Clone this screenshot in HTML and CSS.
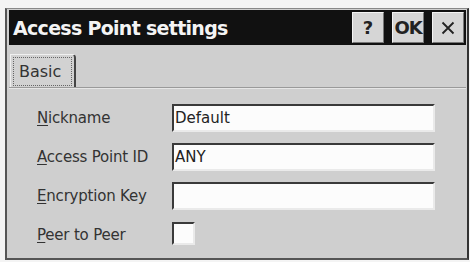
FILE: index.html
```html
<!DOCTYPE html>
<html>
<head>
<meta charset="utf-8">
<link rel="stylesheet" href="styles.css">
</head>
<body>
<div class="window">
  <div class="titlebar">
    <span class="title">Access Point settings</span>
    <div class="tbtns">
      <span class="tbtn">?</span>
      <span class="tbtn ok">OK</span>
      <span class="tbtn close">
        <svg width="14" height="14" viewBox="0 0 14 14"><path d="M1.5 1.5 L12.5 12.5 M12.5 1.5 L1.5 12.5" stroke="#222" stroke-width="1.8"/></svg>
      </span>
    </div>
  </div>
  <div class="tabs">
    <div class="tab"><span class="tablabel">Basic</span></div>
  </div>
  <div class="panel">
    <div class="row">
      <span class="lbl"><u>N</u>ickname</span>
      <div class="field">Default</div>
    </div>
    <div class="row">
      <span class="lbl"><u>A</u>ccess Point ID</span>
      <div class="field">ANY</div>
    </div>
    <div class="row">
      <span class="lbl"><u>E</u>ncryption Key</span>
      <div class="field"></div>
    </div>
    <div class="row">
      <span class="lbl"><u>P</u>eer to Peer</span>
      <div class="check"></div>
    </div>
  </div>
</div>
</body>
</html>
```
FILE: styles.css
```css
html, body {
  margin: 0;
  padding: 0;
  background: #f4f4f4;
}
body {
  font-family: "DejaVu Sans", Tahoma, sans-serif;
  color: #222;
}
.window {
  margin: 8px 0 0 5px;
  width: 457px;
  height: 248px;
  background: #cfcfcf;
  border-left: 2px solid #555;
  border-top: 1px solid #888;
  border-right: 2px solid #333;
  border-bottom: 2px solid #555;
  padding: 1px 1px 0 2px;
  display: flex;
  flex-direction: column;
}
.titlebar {
  height: 35px;
  flex: none;
  background: #111;
  display: flex;
  align-items: center;
  justify-content: space-between;
  padding: 0 2px 0 4px;
}
.title {
  color: #f4f4f4;
  font-family: "DejaVu Sans", sans-serif;
  font-weight: bold;
  font-size: 19px;
  letter-spacing: -0.7px;
}
.tbtns {
  display: flex;
  gap: 8px;
}
.tbtn {
  width: 30px;
  height: 29px;
  background: #d6d6d6;
  border-top: 1px solid #f4f4f4;
  border-left: 1px solid #f4f4f4;
  border-right: 1px solid #777;
  border-bottom: 1px solid #777;
  display: flex;
  align-items: center;
  justify-content: center;
  font-weight: bold;
  font-size: 18px;
  color: #222;
}
.tbtn.ok { letter-spacing: -1px; }
.tabs {
  display: flex;
  flex: none;
  padding: 9px 0 0 1px;
  height: 43px;
  box-sizing: border-box;
  border-bottom: 1px solid #9a9a9a;
}
.tab {
  width: 66px;
  height: 33px;
  box-sizing: border-box;
  border-top: 1px solid #f0f0f0;
  border-left: 1px solid #f0f0f0;
  border-right: 2px solid #444;
  border-top-right-radius: 4px;
  padding: 2px 2px 0 2px;
  background: #d2d2d2;
}
.tablabel {
  display: flex;
  align-items: center;
  height: 27px;
  padding-left: 5px;
  border: 1px dotted #666;
  font-size: 16px;
  color: #333;
}
.panel {
  flex: 1;
  border-top: 1px solid #e6e6e6;
  padding: 15px 0 0 28px;
  display: flex;
  flex-direction: column;
  gap: 11px;
}
.row {
  display: flex;
  align-items: center;
  height: 28px;
}
.lbl {
  width: 135px;
  font-size: 15px;
  letter-spacing: -0.2px;
  color: #333;
}
.lbl u {
  text-decoration-thickness: 1px;
  text-underline-offset: 2px;
}
.field {
  width: 258px;
  height: 24px;
  background: #fcfcfc;
  border-top: 2px solid #3a3a3a;
  border-left: 2px solid #3a3a3a;
  border-right: 2px solid #eaeaea;
  border-bottom: 2px solid #eaeaea;
  font-size: 15px;
  color: #222;
  display: flex;
  align-items: center;
  padding-left: 1px;
}
.check {
  width: 19px;
  height: 19px;
  background: #fcfcfc;
  border-top: 2px solid #3a3a3a;
  border-left: 2px solid #3a3a3a;
  border-right: 2px solid #eaeaea;
  border-bottom: 2px solid #eaeaea;
  align-self: flex-start;
  margin-top: 1px;
}
```
